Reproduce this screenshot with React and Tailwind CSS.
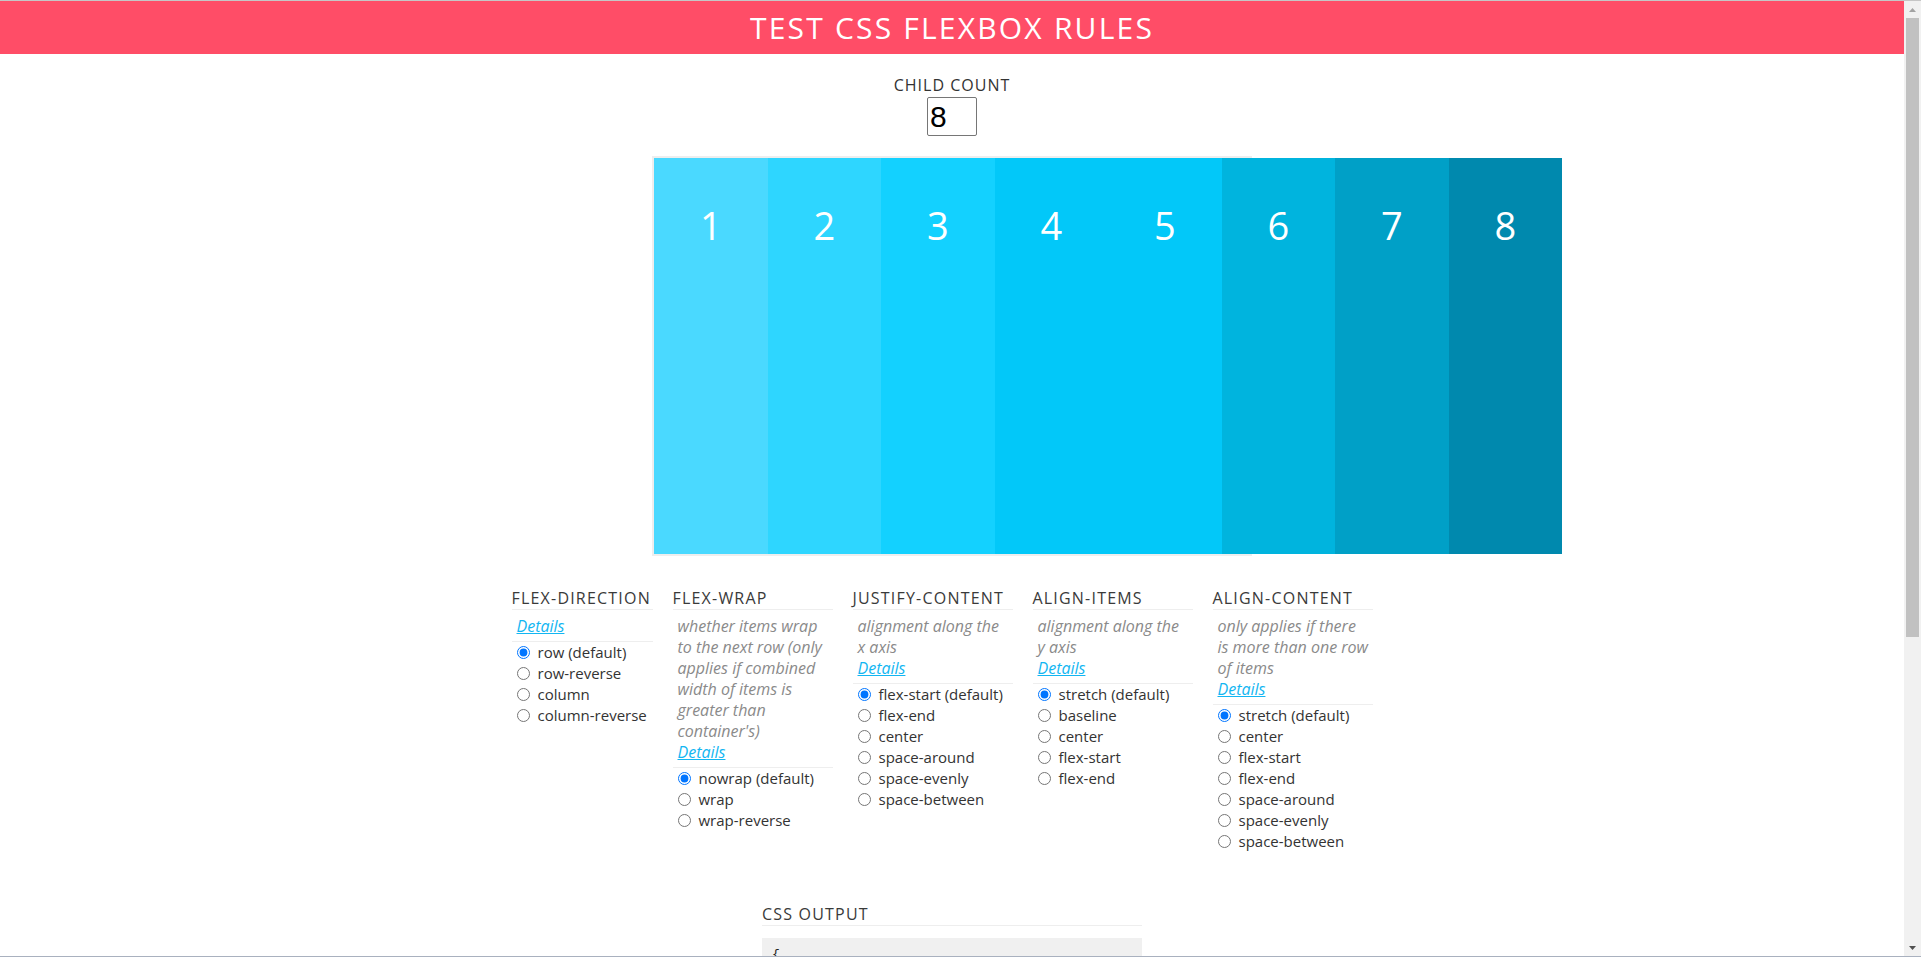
import React from 'react';

const boxes = [
  { n: 1, color: 'bg-[#4ad9ff]' },
  { n: 2, color: 'bg-[#2ed6ff]' },
  { n: 3, color: 'bg-[#13d1ff]' },
  { n: 4, color: 'bg-[#02c8f9]' },
  { n: 5, color: 'bg-[#02c8f9]' },
  { n: 6, color: 'bg-[#00b4de]' },
  { n: 7, color: 'bg-[#00a0c7]' },
  { n: 8, color: 'bg-[#0089ae]' },
];

const groups = [
  {
    name: 'flex-direction',
    title: 'FLEX-DIRECTION',
    width: 'w-[141px]',
    desc: [],
    options: ['row (default)', 'row-reverse', 'column', 'column-reverse'],
  },
  {
    name: 'flex-wrap',
    title: 'FLEX-WRAP',
    width: 'w-[160px]',
    desc: ['whether items wrap', 'to the next row (only', 'applies if combined', 'width of items is', 'greater than', "container's)"],
    options: ['nowrap (default)', 'wrap', 'wrap-reverse'],
  },
  {
    name: 'justify-content',
    title: 'JUSTIFY-CONTENT',
    width: 'w-[160px]',
    desc: ['alignment along the', 'x axis'],
    options: ['flex-start (default)', 'flex-end', 'center', 'space-around', 'space-evenly', 'space-between'],
  },
  {
    name: 'align-items',
    title: 'ALIGN-ITEMS',
    width: 'w-[160px]',
    desc: ['alignment along the', 'y axis'],
    options: ['stretch (default)', 'baseline', 'center', 'flex-start', 'flex-end'],
  },
  {
    name: 'align-content',
    title: 'ALIGN-CONTENT',
    width: 'w-[160px]',
    desc: ['only applies if there', 'is more than one row', 'of items'],
    options: ['stretch (default)', 'center', 'flex-start', 'flex-end', 'space-around', 'space-evenly', 'space-between'],
  },
];

function RuleGroup({ group }) {
  return (
    <div className={`${group.width} mr-5 shrink-0`}>
      <h3 className="text-[16px] leading-[20px] tracking-[1.2px] text-[#3a3a3a] whitespace-nowrap border-b border-[#eeeeee] pb-[1px]">
        {group.title}
      </h3>
      <div className="px-[5px] pt-[6px] pb-[4px] border-b border-[#eeeeee] text-[16px] leading-[21px] italic">
        {group.desc.length > 0 && (
          <p className="text-[#8a8a8a] whitespace-nowrap">
            {group.desc.map((line, i) => (
              <React.Fragment key={i}>
                {line}
                {i < group.desc.length - 1 && <br />}
              </React.Fragment>
            ))}
          </p>
        )}
        <a href="#" className="text-[#12b6f2] underline">Details</a>
      </div>
      <div className="flex flex-col">
        {group.options.map((opt, i) => (
          <label key={opt} className="flex items-center gap-[8px] pl-[5px] h-[21px] text-[15px] text-[#333] whitespace-nowrap">
            <input type="radio" name={group.name} defaultChecked={i === 0} className="w-[13px] h-[13px] m-0" />
            {opt}
          </label>
        ))}
      </div>
    </div>
  );
}

function Scrollbar() {
  return (
    <div className="w-[17px] shrink-0 bg-[#f1f1f1] flex flex-col items-center">
      <div className="h-[17px] w-full flex items-center justify-center">
        <svg width="7" height="4" viewBox="0 0 7 4"><path d="M3.5 0L7 4H0z" fill="#a3a3a3" /></svg>
      </div>
      <div className="w-[13px] h-[619px] bg-[#c1c1c1]" />
      <div className="flex-1" />
      <div className="h-[17px] w-full flex items-center justify-center">
        <svg width="7" height="4" viewBox="0 0 7 4"><path d="M0 0h7L3.5 4z" fill="#505050" /></svg>
      </div>
    </div>
  );
}

export default function App() {
  return (
    <div className="h-[957px] flex overflow-hidden border-t border-b border-t-[#c6c6c6] border-b-[#a9b1bf] bg-white" style={{ fontFamily: '"Open Sans", "Noto Sans", sans-serif' }}>
      <main className="flex-1 min-w-0 overflow-hidden">
        <header className="h-[53px] bg-[#ff4d67] flex items-center justify-center">
          <h1 className="text-white text-[30px] tracking-[2.2px] leading-none">TEST CSS FLEXBOX RULES</h1>
        </header>

        <div className="flex flex-col items-center mt-[19px]">
          <label htmlFor="count" className="text-[16px] leading-[24px] tracking-[1px] text-[#333]">CHILD COUNT</label>
          <input
            id="count"
            type="text"
            defaultValue="8"
            className="w-[50px] h-[39px] px-[2px] border border-[#767676] rounded-[2px] text-[30px] text-black outline-none"
            style={{ fontFamily: '"Liberation Sans", Arial, sans-serif' }}
          />
        </div>

        <div className="mx-auto mt-[20px] w-[600px] h-[400px] border-2 border-[#eeeeee] flex">
          {boxes.map((b) => (
            <div key={b.n} className={`${b.color} w-[113.5px] shrink-0 text-center text-white text-[38px] leading-[1.5] pt-[39px]`}>
              {b.n}
            </div>
          ))}
        </div>

        <div className="flex justify-center mt-[32px]">
          {groups.map((g) => (
            <RuleGroup key={g.name} group={g} />
          ))}
        </div>

        <section className="mx-auto mt-[52px] w-[380px]">
          <h3 className="text-[16px] leading-[20px] tracking-[1.2px] text-[#3a3a3a] border-b border-[#eeeeee] pb-[1px]">CSS OUTPUT</h3>
          <pre className="mt-[12px] bg-[#f0f0f0] px-[10px] py-[8px] text-[13px] leading-[18px] text-[#222]" style={{ fontFamily: '"Liberation Mono", monospace' }}>
{`{
  display: flex;
  flex-direction: row;
  flex-wrap: nowrap;
  justify-content: flex-start;
  align-items: stretch;
  align-content: stretch;
}`}
          </pre>
        </section>
      </main>
      <Scrollbar />
    </div>
  );
}
